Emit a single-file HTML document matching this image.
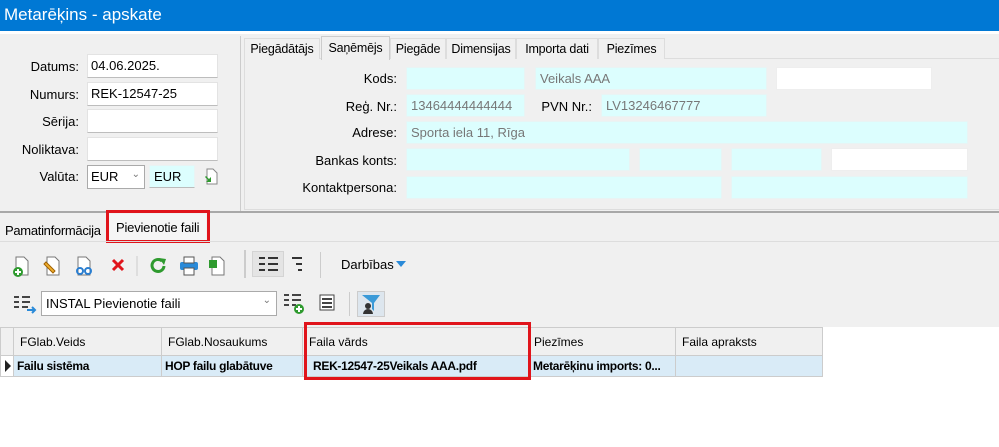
<!DOCTYPE html>
<html><head><meta charset="utf-8"><style>
*{box-sizing:border-box;margin:0;padding:0}
body{width:999px;height:447px;background:#f0f0f0;font-family:"Liberation Sans",sans-serif;font-size:13px;color:#000;position:relative;overflow:hidden}
.a{position:absolute}
.t{position:absolute;white-space:nowrap}
.in{position:absolute;background:#fff;border:1px solid #e3e3e3;border-bottom:1px solid #bdbdbd;padding:3px 3px;font-size:13px;white-space:nowrap}
.cy{position:absolute;background:#dcfefe;border:1px solid #e8f4f4;padding:3px 4px;color:#777;font-size:13px;white-space:nowrap}
.lb{position:absolute;text-align:right;white-space:nowrap}
.tab{position:absolute;top:38px;height:21px;border:1px solid #ddd;border-bottom:none;padding:3px 0;background:#f0f0f0;text-align:center;font-size:12.5px;letter-spacing:-0.2px;white-space:nowrap;overflow:hidden}
.gh{position:absolute;top:328px;height:28px;border-right:1px solid #ccc;padding:7px 6px;font-size:12px;white-space:nowrap;overflow:hidden}
.gc{position:absolute;top:356px;height:20px;border-right:1px solid #ccc;padding:3px 3px;font-size:12px;font-weight:bold;letter-spacing:-0.3px;background:#d9ebf7;white-space:nowrap;overflow:hidden}
</style></head><body>
<div class="a" style="left:0;top:0;width:999px;height:31px;background:#0078d4"></div>
<div class="t" style="left:4px;top:5px;color:#fff;font-size:17px">Metarēķins - apskate</div>
<div class="a" style="left:0;top:31px;width:999px;height:3px;background:#fff"></div>
<div class="a" style="left:0;top:36px;width:241px;height:175px;border-right:1px solid #ccc"></div>
<div class="lb" style="right:920px;top:59px">Datums:</div>
<div class="lb" style="right:920px;top:87px">Numurs:</div>
<div class="lb" style="right:920px;top:114px">Sērija:</div>
<div class="lb" style="right:920px;top:142px">Noliktava:</div>
<div class="lb" style="right:920px;top:169px">Valūta:</div>
<div class="in" style="left:87px;top:54px;width:131px;height:24px">04.06.2025.</div>
<div class="in" style="left:87px;top:82px;width:131px;height:24px">REK-12547-25</div>
<div class="in" style="left:87px;top:109px;width:131px;height:24px"></div>
<div class="in" style="left:87px;top:137px;width:131px;height:24px"></div>
<div class="in" style="left:87px;top:165px;width:58px;height:24px;border:1px solid #aaa">EUR<span style="position:absolute;right:4px;top:3px;color:#777;font-size:10px">&#8964;</span></div>
<div class="cy" style="left:149px;top:165px;width:46px;height:23px;color:#000;border-bottom:1px solid #bbb">EUR</div>
<svg class="a" style="left:202px;top:168px" width="16" height="20"><path d="M5 1h6l4 4v11H5z" fill="#fff" stroke="#888"/><path d="M9 9v5H4l2-2-3-3 1-1 3 3z" fill="#2e9a2e"/></svg>
<div class="a" style="left:244px;top:58px;width:755px;height:152px;border:1px solid #ddd;border-right:none"></div>
<div class="tab" style="left:244px;width:76px">Piegādātājs</div>
<div class="tab" style="left:321px;top:36px;height:24px;width:69px;border-color:#ccc;padding-top:4px">Saņēmējs</div>
<div class="tab" style="left:390px;width:56px">Piegāde</div>
<div class="tab" style="left:446px;width:70px">Dimensijas</div>
<div class="tab" style="left:516px;width:82px">Importa dati</div>
<div class="tab" style="left:598px;width:67px">Piezīmes</div>
<div class="lb" style="right:602px;top:71px">Kods:</div>
<div class="lb" style="right:602px;top:99px">Reģ. Nr.:</div>
<div class="lb" style="right:602px;top:125px">Adrese:</div>
<div class="lb" style="right:602px;top:153px">Bankas konts:</div>
<div class="lb" style="right:602px;top:180px">Kontaktpersona:</div>
<div class="lb" style="right:407px;top:99px">PVN Nr.:</div>
<div class="cy" style="left:406px;top:67px;width:119px;height:23px"></div>
<div class="cy" style="left:535px;top:67px;width:232px;height:23px">Veikals AAA</div>
<div class="in" style="left:776px;top:67px;width:156px;height:23px;border:1px solid #eee"></div>
<div class="cy" style="left:406px;top:94px;width:119px;height:23px;overflow:hidden">13464444444444</div>
<div class="cy" style="left:601px;top:94px;width:166px;height:23px">LV13246467777</div>
<div class="cy" style="left:406px;top:121px;width:562px;height:23px">Sporta iela 11, Rīga</div>
<div class="cy" style="left:406px;top:148px;width:224px;height:23px"></div>
<div class="cy" style="left:639px;top:148px;width:83px;height:23px"></div>
<div class="cy" style="left:731px;top:148px;width:91px;height:23px"></div>
<div class="in" style="left:831px;top:148px;width:137px;height:23px;border:1px solid #eee"></div>
<div class="cy" style="left:406px;top:176px;width:316px;height:23px"></div>
<div class="cy" style="left:731px;top:176px;width:237px;height:23px"></div>
<div class="a" style="left:0;top:211px;width:999px;height:2px;background:#a8a8a8"></div>
<div class="t" style="left:5px;top:223px;letter-spacing:-0.3px">Pamatinformācija</div>
<div class="a" style="left:108px;top:214px;width:98px;height:27px;background:#f5f5f5"></div>
<div class="t" style="left:116px;top:220px;letter-spacing:-0.2px">Pievienotie faili</div>
<div class="a" style="left:106px;top:210px;width:104px;height:33px;border:3px solid #e0141b"></div>
<div class="a" style="left:0;top:241px;width:999px;height:1px;background:#ddd"></div>
<svg class="a" style="left:12px;top:254px" width="220" height="24">
<path d="M4 3h8l4 4v14H4z" fill="#fff" stroke="#777"/><circle cx="6" cy="18" r="5" fill="#2e9a2e"/><path d="M6 15v6M3 18h6" stroke="#fff" stroke-width="2"/>
<path d="M35 3h8l4 4v14H35z" fill="#fff" stroke="#777"/><path d="M34 8l9 9-2 2-9-9z" fill="#f0b030" stroke="#a06000"/>
<path d="M66 3h8l4 4v14H66z" fill="#fff" stroke="#777"/><circle cx="68" cy="17" r="3" fill="none" stroke="#2a7ed0" stroke-width="2"/><circle cx="76" cy="17" r="3" fill="none" stroke="#2a7ed0" stroke-width="2"/>
<path d="M101 6l10 10M111 6l-10 10" stroke="#e0141b" stroke-width="3"/>
<path d="M125 2v20" stroke="#ccc"/>
<path d="M150 7a6 6 0 1 0 2 5" fill="none" stroke="#2e9a2e" stroke-width="3"/><path d="M147 4l7 1-2 6z" fill="#2e9a2e"/>
<rect x="168" y="8" width="18" height="8" rx="2" fill="#2a8ad8"/><rect x="172" y="3" width="10" height="6" fill="#fff" stroke="#555"/><rect x="172" y="14" width="10" height="7" fill="#fff" stroke="#555"/>
<path d="M200 3h8l4 4v14H200z" fill="#fff" stroke="#777"/><rect x="197" y="6" width="8" height="8" fill="#2e9a2e"/>
</svg>
<div class="a" style="left:244px;top:250px;width:2px;height:28px;border-left:1px solid #ccc;border-right:1px solid #ccc"></div>
<div class="a" style="left:252px;top:251px;width:32px;height:26px;background:#e4e4e4;border:1px solid #d4d4d4"></div>
<svg class="a" style="left:258px;top:256px" width="60" height="18"><path d="M1 2h6M10 2h10M1 8h6M10 8h10M1 14h6M10 14h10M34 2h10M38 8h6M40 14h4" stroke="#333" stroke-width="2"/></svg>
<div class="a" style="left:320px;top:252px;width:1px;height:26px;background:#ccc"></div>
<div class="t" style="left:341px;top:257px">Darbības</div>
<svg class="a" style="left:396px;top:261px" width="10" height="7"><path d="M0 0h10L5 6z" fill="#2a8ad8"/></svg>
<svg class="a" style="left:13px;top:294px" width="24" height="20"><path d="M1 3h5M9 3h8M1 8h5M9 8h8M1 13h5M9 13h6" stroke="#444" stroke-width="2"/><path d="M14 16h8M19 13l3 3-3 3" stroke="#2a8ad8" stroke-width="2" fill="none"/></svg>
<div class="in" style="left:41px;top:291px;width:236px;height:25px;border:1px solid #aaa;padding:4px 4px">INSTAL Pievienotie faili<span style="position:absolute;right:5px;top:3px;color:#777;font-size:10px">&#8964;</span></div>
<svg class="a" style="left:283px;top:292px" width="60" height="24"><path d="M1 3h5M9 3h9M1 8h5M9 8h9M1 13h5M9 13h4" stroke="#444" stroke-width="2"/><circle cx="16" cy="17" r="5" fill="#2e9a2e"/><path d="M16 14v6M13 17h6" stroke="#fff" stroke-width="2"/><rect x="37" y="3" width="14" height="15" fill="#fff" stroke="#444"/><path d="M39 7h10M39 11h10M39 15h10" stroke="#444" stroke-width="2"/></svg>
<div class="a" style="left:349px;top:292px;width:1px;height:24px;background:#ccc"></div>
<div class="a" style="left:357px;top:291px;width:28px;height:26px;background:#dde6ee;border:1px solid #ccc"></div>
<svg class="a" style="left:360px;top:294px" width="22" height="20"><path d="M2 1h18l-6 8v8l-2-2V9z" fill="#3a9ad8"/><circle cx="8" cy="12" r="3" fill="#333"/><path d="M3 20a5 5 0 0 1 10 0z" fill="#333"/></svg>
<div class="a" style="left:0;top:327px;width:999px;height:120px;background:#fff"></div>
<div class="a" style="left:0;top:327px;width:823px;height:1px;background:#ccc"></div>
<div class="a" style="left:0;top:328px;width:823px;height:28px;background:#f0f0f0;border-bottom:1px solid #ccc"></div>
<div class="gh" style="left:0;width:14px;border-left:1px solid #ccc"></div>
<div class="gh" style="left:14px;width:148px">FGlab.Veids</div>
<div class="gh" style="left:162px;width:141px">FGlab.Nosaukums</div>
<div class="gh" style="left:303px;width:228px">Faila vārds</div>
<div class="gh" style="left:531px;width:145px;padding-left:3px">Piezīmes</div>
<div class="gh" style="left:676px;width:147px">Faila apraksts</div>
<div class="gc" style="left:0;width:14px;background:#fff;border-left:1px solid #ccc"><svg width="8" height="12" style="position:absolute;left:4px;top:4px"><path d="M0 0l6 6-6 6z" fill="#222"/></svg></div>
<div class="gc" style="left:14px;width:148px">Failu sistēma</div>
<div class="gc" style="left:162px;width:141px">HOP failu glabātuve</div>
<div class="gc" style="left:303px;width:228px;padding-left:10px">REK-12547-25Veikals AAA.pdf</div>
<div class="gc" style="left:531px;width:145px;padding-left:2px">Metarēķinu imports: 0...</div>
<div class="gc" style="left:676px;width:147px"></div>
<div class="a" style="left:0;top:376px;width:823px;height:1px;background:#ccc"></div>
<div class="a" style="left:304px;top:322px;width:227px;height:58px;border:3px solid #e0141b"></div>
</body></html>
